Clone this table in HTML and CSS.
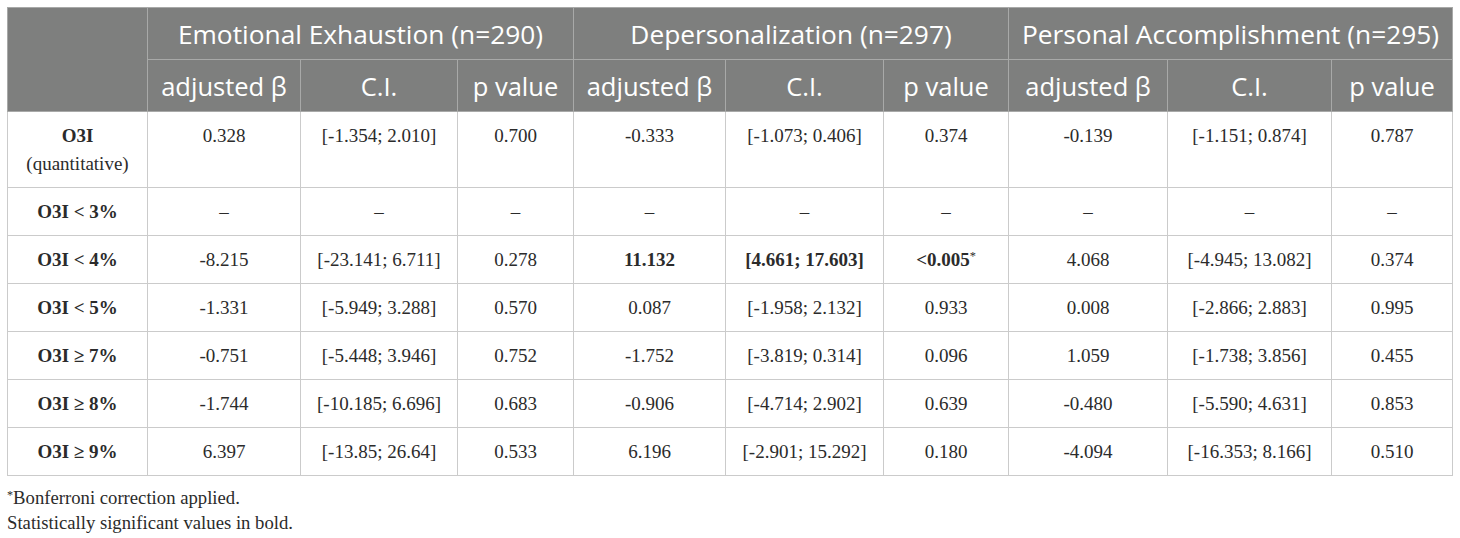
FILE: index.html
```html
<!DOCTYPE html>
<html lang="en">
<head>
  <meta charset="UTF-8" />
  <title>O3I and burnout dimensions</title>
  <link rel="stylesheet" href="styles.css">
</head>
<body>

  <div class="wrap">
    <table class="results">
      <colgroup>
        <col style="width:140px">
        <col style="width:153px">
        <col style="width:157px">
        <col style="width:116px">
        <col style="width:152px">
        <col style="width:158px">
        <col style="width:125px">
        <col style="width:159px">
        <col style="width:164px">
        <col style="width:121px">
      </colgroup>
      <thead>
        <tr class="group-row">
          <th rowspan="2"></th>
          <th colspan="3">Emotional Exhaustion (n=290)</th>
          <th colspan="3">Depersonalization (n=297)</th>
          <th colspan="3">Personal Accomplishment (n=295)</th>
        </tr>
        <tr class="sub-row">
          <th>adjusted β</th>
          <th>C.I.</th>
          <th>p value</th>
          <th>adjusted β</th>
          <th>C.I.</th>
          <th>p value</th>
          <th>adjusted β</th>
          <th>C.I.</th>
          <th>p value</th>
        </tr>
      </thead>
      <tbody>
        <tr>
          <td class="label"><b>O3I</b><br>(quantitative)</td>
          <td>0.328</td><td>[-1.354; 2.010]</td><td>0.700</td>
          <td>-0.333</td><td>[-1.073; 0.406]</td><td>0.374</td>
          <td>-0.139</td><td>[-1.151; 0.874]</td><td>0.787</td>
        </tr>
        <tr>
          <td class="label"><b>O3I &lt; 3%</b></td>
          <td>–</td><td>–</td><td>–</td>
          <td>–</td><td>–</td><td>–</td>
          <td>–</td><td>–</td><td>–</td>
        </tr>
        <tr>
          <td class="label"><b>O3I &lt; 4%</b></td>
          <td>-8.215</td><td>[-23.141; 6.711]</td><td>0.278</td>
          <td><b>11.132</b></td><td><b>[4.661; 17.603]</b></td><td><b>&lt;0.005</b><sup>*</sup></td>
          <td>4.068</td><td>[-4.945; 13.082]</td><td>0.374</td>
        </tr>
        <tr>
          <td class="label"><b>O3I &lt; 5%</b></td>
          <td>-1.331</td><td>[-5.949; 3.288]</td><td>0.570</td>
          <td>0.087</td><td>[-1.958; 2.132]</td><td>0.933</td>
          <td>0.008</td><td>[-2.866; 2.883]</td><td>0.995</td>
        </tr>
        <tr>
          <td class="label"><b>O3I ≥ 7%</b></td>
          <td>-0.751</td><td>[-5.448; 3.946]</td><td>0.752</td>
          <td>-1.752</td><td>[-3.819; 0.314]</td><td>0.096</td>
          <td>1.059</td><td>[-1.738; 3.856]</td><td>0.455</td>
        </tr>
        <tr>
          <td class="label"><b>O3I ≥ 8%</b></td>
          <td>-1.744</td><td>[-10.185; 6.696]</td><td>0.683</td>
          <td>-0.906</td><td>[-4.714; 2.902]</td><td>0.639</td>
          <td>-0.480</td><td>[-5.590; 4.631]</td><td>0.853</td>
        </tr>
        <tr>
          <td class="label"><b>O3I ≥ 9%</b></td>
          <td>6.397</td><td>[-13.85; 26.64]</td><td>0.533</td>
          <td>6.196</td><td>[-2.901; 15.292]</td><td>0.180</td>
          <td>-4.094</td><td>[-16.353; 8.166]</td><td>0.510</td>
        </tr>
      </tbody>
    </table>

    <div class="notes">
      <p><sup>*</sup>Bonferroni correction applied.</p>
      <p>Statistically significant values in bold.</p>
    </div>
  </div>

</body>
</html>
```

FILE: styles.css
```css
* { margin: 0; padding: 0; box-sizing: border-box; }
body {
  background: #fff;
  color: #2b2b2b;
  font-family: "Liberation Serif", "Times New Roman", serif;
}

.wrap {
  padding: 7px;
}

.results {
  width: 1445px;
  border-collapse: collapse;
  table-layout: fixed;
}

.results th {
  background: #7e7f7e;
  color: #fff;
  font-family: "Open Sans", "Noto Sans", sans-serif;
  font-weight: 400;
  font-size: 25.5px;
  line-height: 32px;
  padding: 10px 2px 9px;
  border: 1px solid #a8a9a8;
  white-space: nowrap;
  text-align: center;
}

.results .group-row th {
  font-size: 26.3px;
}

.results td {
  font-size: 19px;
  line-height: 28px;
  padding: 10px 4px 9px;
  text-align: center;
  vertical-align: top;
  border: 1px solid #cbcbcb;
}

.results sup,
.notes sup {
  font-size: 0.65em;
  vertical-align: 0.45em;
  line-height: 0;
}

.notes {
  margin-top: 9px;
  font-size: 18.7px;
  line-height: 25px;
}
```
